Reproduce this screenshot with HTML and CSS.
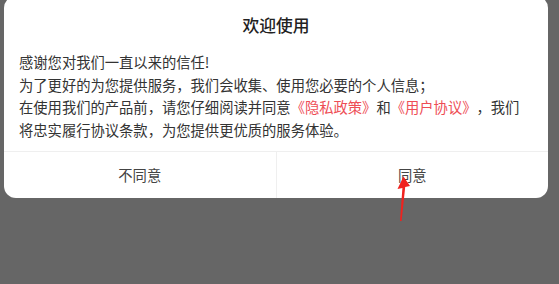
FILE: index.html
```html
<!DOCTYPE html>
<html lang="zh-CN">
<head>
    <meta charset="UTF-8">
    <meta name="viewport" content="width=device-width, initial-scale=1.0">
    <title>欢迎使用</title>
    <link rel="stylesheet" href="styles.css">
</head>
<body>
    <div class="dialog">
        <div class="dialog-title">欢迎使用</div>
        <div class="dialog-body">
            <p>感谢您对我们一直以来的信任!</p>
            <p>为了更好的为您提供服务，我们会收集、使用您必要的个人信息；</p>
            <p>在使用我们的产品前，请您仔细阅读并同意<a class="link">《隐私政策》</a>和<a class="link">《用户协议》</a>，我们将忠实履行协议条款，为您提供更优质的服务体验。</p>
        </div>
        <div class="dialog-footer">
            <div class="btn">不同意</div>
            <div class="btn btn-agree">同意
                <svg class="arrow" width="20" height="50" viewBox="0 0 20 50">
                    <path d="M5 46 L7.4 13 L2.5 14 L8.5 1.5 L15 11 L10.2 12 L6.6 46 Z" fill="#f0221e"/>
                </svg>
            </div>
        </div>
    </div>
</body>
</html>
```

FILE: styles.css
```css
body {
    margin: 0;
    padding: 0 11px 0 4px;
    background: #666666;
    font-family: "Noto Sans CJK SC", "Noto Sans", sans-serif;
    color: #333;
    height: 284px;
    overflow: hidden;
}

.dialog {
    margin-top: -4px;
    background: #fff;
    border-radius: 12px;
}

.dialog-title {
    padding-top: 17px;
    font-size: 16.8px;
    line-height: 24px;
    font-weight: 500;
    text-align: center;
    color: #222;
}

.dialog-body {
    padding: 14px 24px 9px 15px;
    font-size: 14.3px;
    line-height: 22.7px;
    text-spacing-trim: space-all;
}

.dialog-body p {
    margin: 0;
}

.link {
    color: #ee4d55;
}

.dialog-footer {
    display: flex;
    border-top: 1px solid #efefef;
    height: 46px;
}

.btn {
    flex: 1;
    display: flex;
    align-items: center;
    justify-content: center;
    font-size: 14.3px;
    color: #444;
}

.btn + .btn {
    border-left: 1px solid #efefef;
}

.btn-agree {
    position: relative;
}

.arrow {
    position: absolute;
    left: 118px;
    top: 23px;
}
```
